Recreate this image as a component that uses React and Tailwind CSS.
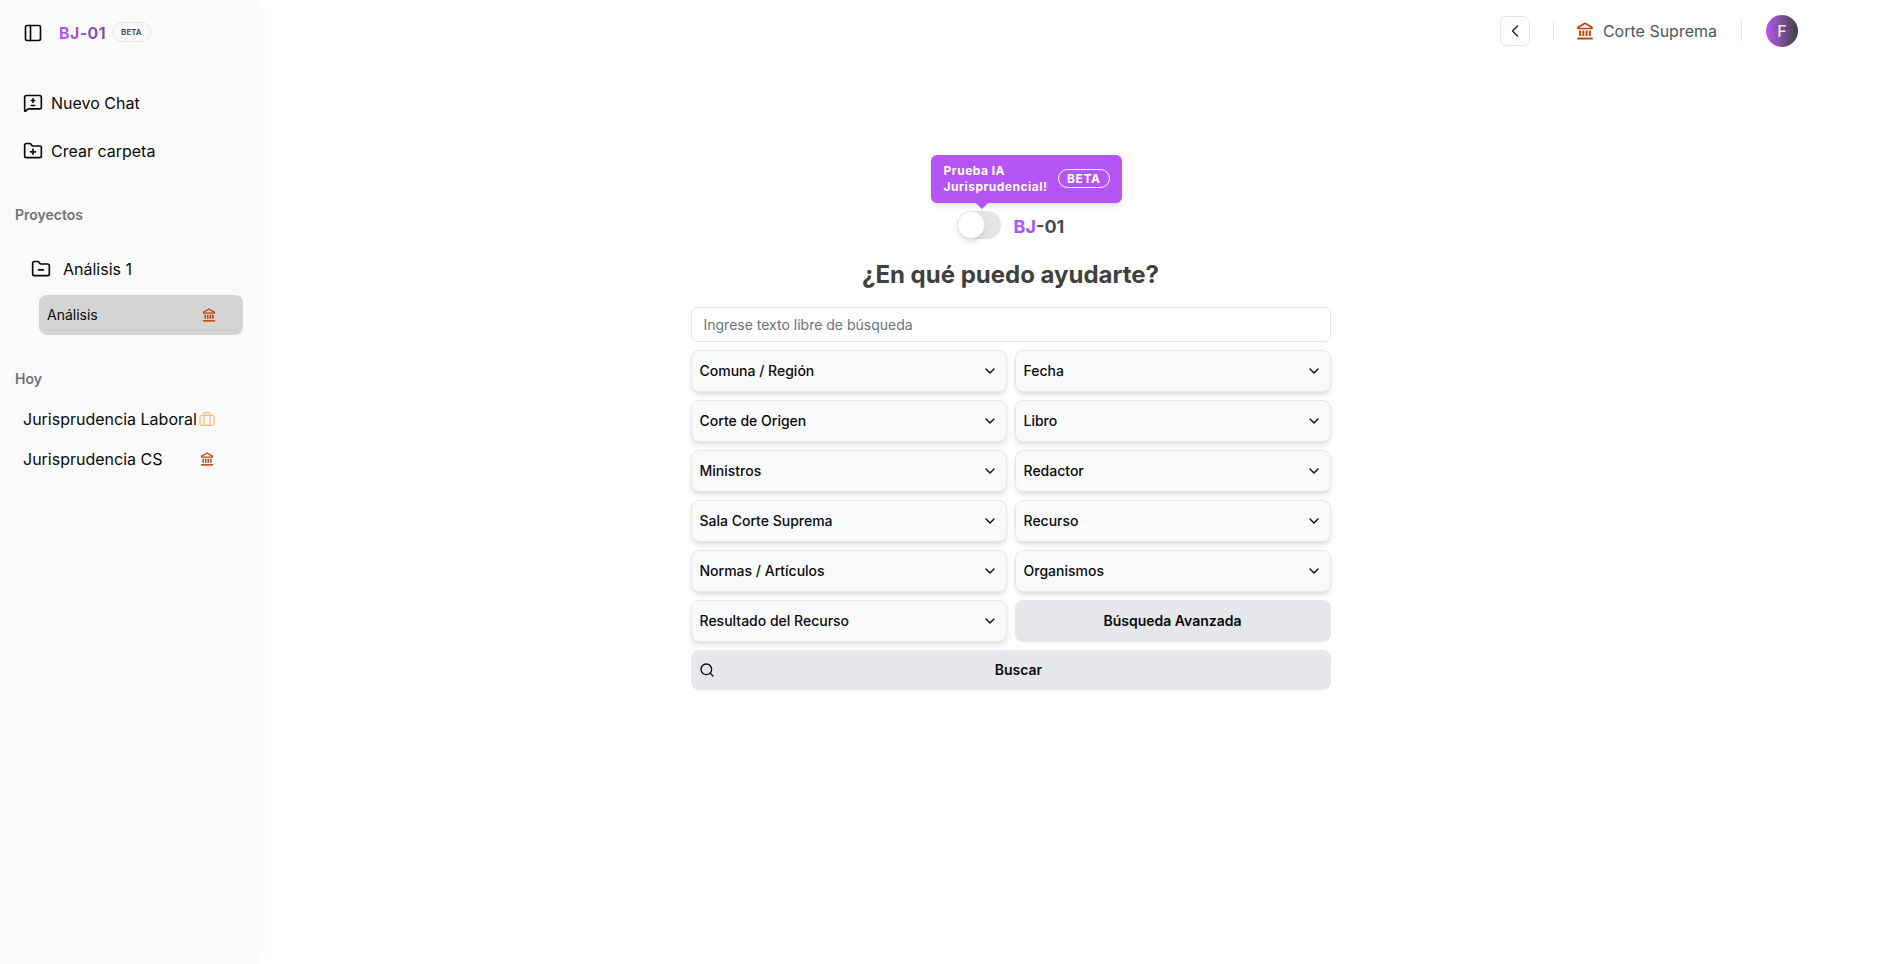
import { ChevronDown, ChevronLeft, FolderMinus, FolderPlus, MessageSquareDiff, PanelLeft, Search } from 'lucide-react';

// icono de banco (corte suprema)
const BankIcon = ({ className }) => (
    <svg className={className} viewBox="2 1 20 22" fill="none" stroke="currentColor" strokeWidth="2" strokeLinejoin="round">
        <path d="M12 2.5 3.5 7.5v1.5h17V7.5z" />
        <path d="M6 11.5v6.5M10 11.5v6.5M14 11.5v6.5M18 11.5v6.5" strokeWidth="2.4" />
        <path d="M2.5 21.2h19" strokeWidth="2.4" />
    </svg>
);

// maletin laboral
const CaseIcon = ({ className }) => (
    <svg className={className} viewBox="0 0 24 24" fill="none" stroke="currentColor" strokeWidth="1.9" strokeLinejoin="round">
        <rect x="1.5" y="6.5" width="21" height="15" rx="2.5" />
        <path d="M7.5 6.5V3.5a1.5 1.5 0 0 1 1.5-1.5h6a1.5 1.5 0 0 1 1.5 1.5v3M7.5 6.5v15M16.5 6.5v15" />
    </svg>
);

const leftFilters = ['Comuna / Región', 'Corte de Origen', 'Ministros', 'Sala Corte Suprema', 'Normas / Artículos', 'Resultado del Recurso'];
const rightFilters = ['Fecha', 'Libro', 'Redactor', 'Recurso', 'Organismos'];

const FilterSelect = ({ label }) => (
    <button className="flex h-[42px] w-full items-center justify-between rounded-lg border border-gray-200 bg-[#f9fafb] pl-2 pr-2 text-sm font-medium text-[#0a0a0a] shadow-md">
        {label}
        <ChevronDown className="size-4" />
    </button>
);

const Sidebar = () => (
    <aside className="flex h-screen w-[260px] shrink-0 flex-col bg-[#fafafa] text-[#0a0a0a] shadow-[4px_0_12px_rgba(0,0,0,0.02)]">
        <div className="mt-[16px] flex h-[33px] items-center pl-[23px]">
            <PanelLeft className="size-5" />
            <span className="ml-[16px] bg-gradient-to-r from-[#b855f7] to-[#7c4bb0] bg-clip-text font-bold tracking-wide text-transparent">BJ-01</span>
            <span className="ml-[6px] -mt-[2px] rounded-full border border-gray-200 px-[8px] py-[3px] text-[8px] font-semibold text-[#404040]">BETA</span>
        </div>

        <div className="mt-[44px] flex items-center gap-2 pl-[23px] leading-5">
            <MessageSquareDiff className="size-5" />
            Nuevo Chat
        </div>
        <div className="mt-[28px] flex items-center gap-2 pl-[23px] leading-5">
            <FolderPlus className="size-5" />
            Crear carpeta
        </div>

        <div className="mt-[44px] pl-[15px] text-sm font-semibold leading-5 text-[#71717a]">Proyectos</div>

        <div className="mt-[34px] flex items-center gap-[12px] pl-[31px] leading-5">
            <FolderMinus className="size-5" />
            Análisis 1
        </div>
        <div className="ml-[39px] mt-[16px] flex h-[40px] w-[204px] items-center justify-between rounded-lg bg-[#d4d4d4] pl-2 pr-[27px] text-sm">
            Análisis
            <BankIcon className="size-[14px] text-[#c2410c]" />
        </div>

        <div className="mt-[34px] pl-[15px] text-sm font-semibold leading-5 text-[#71717a]">Hoy</div>

        <div className="mt-[20px] flex items-center pl-[23px] leading-5">
            Jurisprudencia Laboral
            <CaseIcon className="ml-[2px] size-4 text-[#fdba74]" />
        </div>
        <div className="mt-[20px] flex w-[214px] items-center justify-between pl-[23px] leading-5">
            Jurisprudencia CS
            <BankIcon className="size-[14px] text-[#c2410c]" />
        </div>
    </aside>
);

const Topbar = () => (
    <header className="flex h-[62px] items-center justify-end pr-[79px] text-[#4b5563]">
        <button className="flex size-[30px] items-center justify-center rounded-md border border-gray-200 text-[#262626]">
            <ChevronLeft className="size-5" strokeWidth={1.75} />
        </button>
        <div className="ml-[23px] mr-[22px] h-5 w-px bg-gray-200" />
        <BankIcon className="size-[18px] text-[#c2410c]" />
        <span className="ml-[9px]">Corte Suprema</span>
        <div className="mx-[24px] h-5 w-px bg-gray-200" />
        <div className="flex size-8 items-center justify-center rounded-full bg-gradient-to-r from-[#b855f7] to-[#404040] text-base font-medium text-[#e5e5e5]">F</div>
    </header>
);

export default function App() {
    return (
        <div className="flex h-screen overflow-hidden bg-white font-['Inter',sans-serif]">
            <Sidebar />
            <main className="flex-1">
                <Topbar />
                <div className="flex flex-col items-center pr-[116px] pt-[149px]">
                    <div className="relative flex h-7 items-center gap-[13px]">
                        {/* tooltip de prueba */}
                        <div className="absolute -top-[56px] left-[-26px] flex h-12 w-[191px] items-center justify-between rounded-md bg-[#b655f5] pl-[13px] pr-3 text-xs font-bold leading-4 tracking-[0.04em] text-white shadow-md">
                            <span className="w-[110px]">Prueba IA Jurisprudencial!</span>
                            <span className="-mt-[1px] rounded-full border border-white px-2 text-xs leading-[17px] tracking-wider">BETA</span>
                            <span className="absolute -bottom-[6px] left-[45px] size-0 border-x-[6px] border-t-[6px] border-x-transparent border-t-[#b655f5]" />
                        </div>
                        <div className="flex h-7 w-11 items-center rounded-full bg-[#e5e5e5]">
                            <div className="size-7 rounded-full border border-gray-200 bg-white shadow-md" />
                        </div>
                        <div className="mt-[4px] text-lg font-bold text-[#4b4b55]"><span className="text-[#a855f7]">BJ</span>-01</div>
                    </div>

                    <h1 className="mt-[20px] text-2xl font-bold text-[#404040]">¿En qué puedo ayudarte?</h1>

                    <div className="mt-[16px] flex w-[640px] flex-col gap-2">
                        <input
                            type="text"
                            placeholder="Ingrese texto libre de búsqueda"
                            className="h-[35px] w-full rounded-md border border-gray-200 px-3 text-sm placeholder:text-gray-500"
                        />
                        <div className="grid grid-cols-2 gap-2">
                            {leftFilters.map((label, i) => (
                                <div key={label} className="contents">
                                    <FilterSelect label={label} />
                                    {rightFilters[i] ? (
                                        <FilterSelect label={rightFilters[i]} />
                                    ) : (
                                        <button className="h-[42px] rounded-lg bg-[#e5e7eb] text-sm font-semibold text-[#0a0a0a]">Búsqueda Avanzada</button>
                                    )}
                                </div>
                            ))}
                        </div>
                        <button className="relative flex h-10 items-center justify-center rounded-lg bg-[#e5e7eb] pl-4 text-sm font-semibold text-[#0a0a0a]">
                            <Search className="absolute left-2 size-4" />
                            Buscar
                        </button>
                    </div>
                </div>
            </main>
        </div>
    );
}
